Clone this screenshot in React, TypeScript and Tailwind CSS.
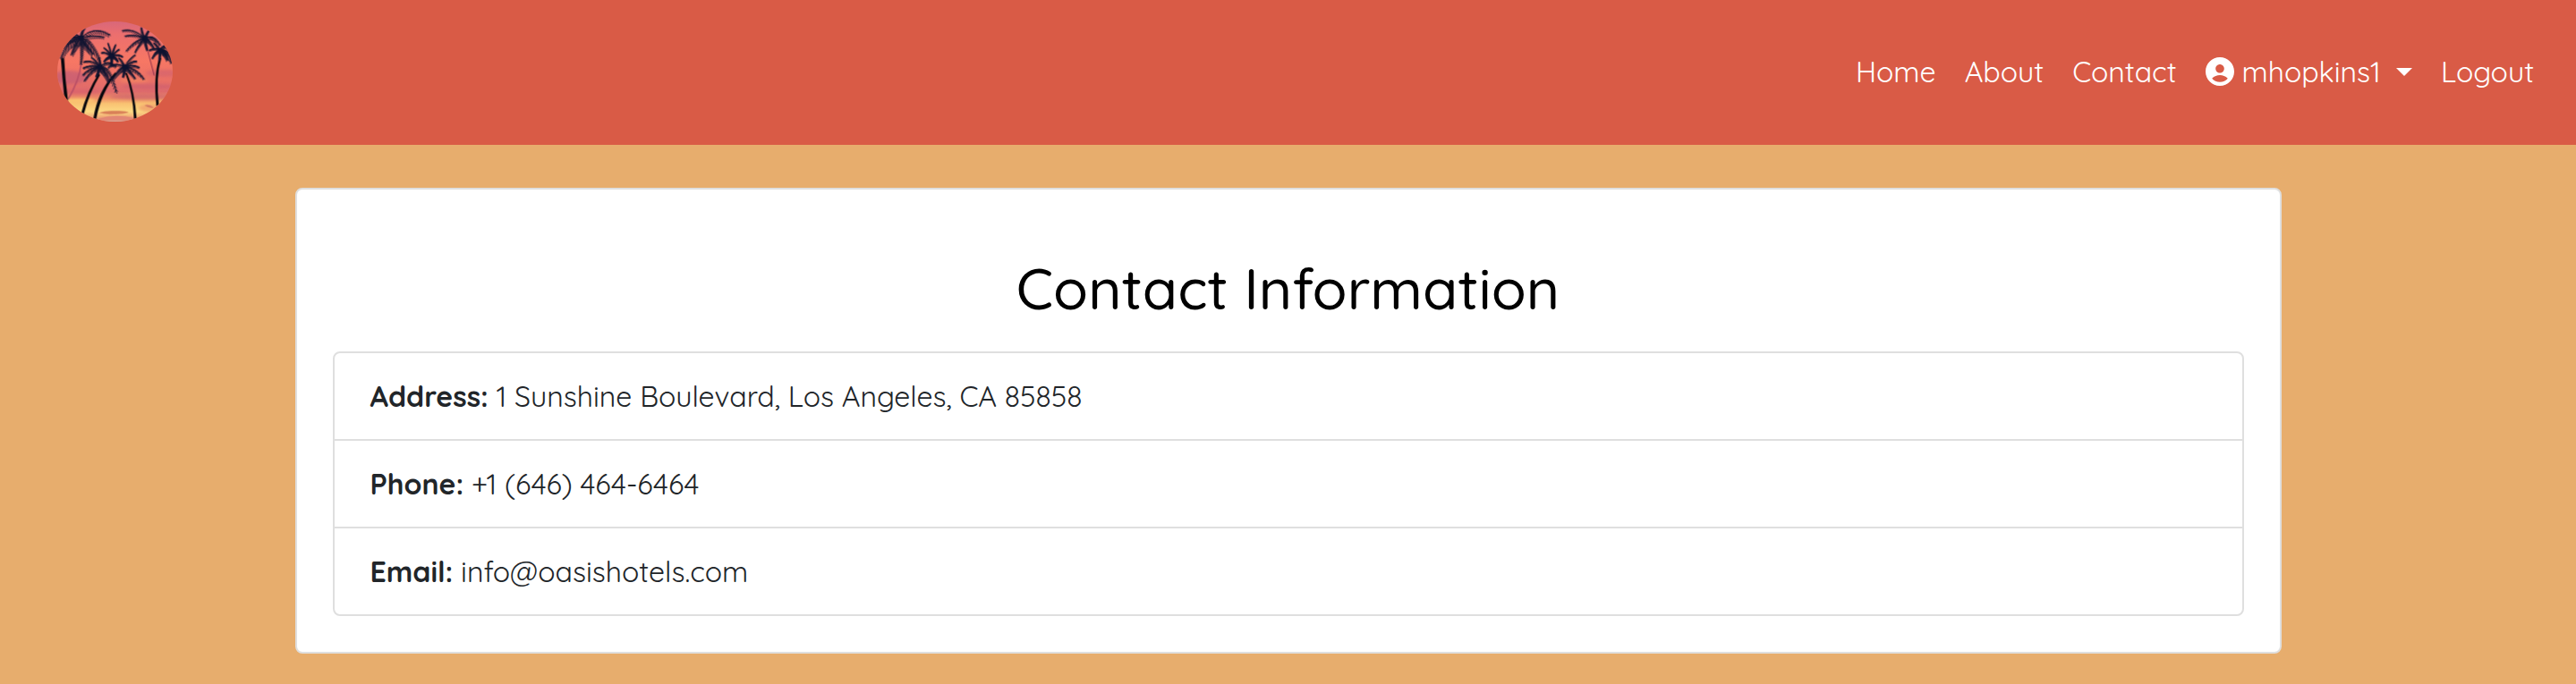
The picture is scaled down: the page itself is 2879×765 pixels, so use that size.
type Point = [number, number];
type FrondShape = { bend: Point; tip: Point; leaf: number };
type PalmShape = { crown: Point; fronds: FrondShape[] };

const INK = "#0d1230";

const palms: PalmShape[] = [
  {
    crown: [122, 82],
    fronds: [
      { bend: [165, 38], tip: [220, 74], leaf: 19 },
      { bend: [160, 70], tip: [200, 80], leaf: 15 },
      { bend: [155, 95], tip: [183, 152], leaf: 22 },
      { bend: [136, 110], tip: [162, 138], leaf: 18 },
      { bend: [128, 120], tip: [121, 172], leaf: 14 },
      { bend: [105, 100], tip: [90, 140], leaf: 18 },
      { bend: [78, 88], tip: [54, 152], leaf: 24 },
      { bend: [90, 70], tip: [60, 110], leaf: 22 },
      { bend: [100, 62], tip: [82, 72], leaf: 14 },
      { bend: [122, 60], tip: [134, 48], leaf: 10 },
    ],
  },
  {
    crown: [224, 143],
    fronds: [
      { bend: [206, 128], tip: [190, 132], leaf: 7 },
      { bend: [214, 124], tip: [198, 115], leaf: 7 },
      { bend: [220, 120], tip: [212, 99], leaf: 6 },
      { bend: [230, 120], tip: [238, 104], leaf: 7 },
      { bend: [238, 126], tip: [250, 120], leaf: 7 },
      { bend: [246, 134], tip: [262, 146], leaf: 7 },
      { bend: [226, 158], tip: [222, 176], leaf: 8 },
      { bend: [210, 146], tip: [198, 162], leaf: 8 },
      { bend: [238, 146], tip: [246, 162], leaf: 8 },
    ],
  },
  {
    crown: [186, 180],
    fronds: [
      { bend: [158, 152], tip: [130, 163], leaf: 10 },
      { bend: [155, 170], tip: [128, 184], leaf: 10 },
      { bend: [152, 180], tip: [127, 208], leaf: 10 },
      { bend: [155, 190], tip: [132, 228], leaf: 10 },
      { bend: [174, 158], tip: [156, 146], leaf: 9 },
      { bend: [186, 162], tip: [182, 148], leaf: 9 },
      { bend: [208, 150], tip: [240, 180], leaf: 13 },
      { bend: [218, 180], tip: [242, 268], leaf: 18 },
      { bend: [200, 192], tip: [216, 232], leaf: 15 },
      { bend: [180, 195], tip: [172, 212], leaf: 9 },
    ],
  },
  {
    crown: [268, 180],
    fronds: [
      { bend: [282, 152], tip: [304, 138], leaf: 10 },
      { bend: [292, 158], tip: [308, 160], leaf: 10 },
      { bend: [292, 168], tip: [318, 182], leaf: 10 },
      { bend: [305, 182], tip: [334, 222], leaf: 12 },
      { bend: [286, 192], tip: [304, 220], leaf: 10 },
      { bend: [262, 160], tip: [248, 148], leaf: 9 },
      { bend: [240, 160], tip: [212, 182], leaf: 10 },
      { bend: [250, 186], tip: [228, 222], leaf: 14 },
      { bend: [268, 196], tip: [262, 214], leaf: 9 },
    ],
  },
  {
    crown: [336, 84],
    fronds: [
      { bend: [300, 48], tip: [259, 58], leaf: 12 },
      { bend: [305, 68], tip: [268, 76], leaf: 10 },
      { bend: [305, 88], tip: [272, 128], leaf: 11 },
      { bend: [318, 100], tip: [302, 132], leaf: 9 },
      { bend: [326, 66], tip: [324, 47], leaf: 9 },
      { bend: [340, 66], tip: [350, 56], leaf: 9 },
      { bend: [360, 66], tip: [388, 108], leaf: 13 },
      { bend: [338, 104], tip: [344, 124], leaf: 9 },
      { bend: [350, 90], tip: [366, 116], leaf: 10 },
    ],
  },
  {
    crown: [388, 124],
    fronds: [
      { bend: [372, 112], tip: [350, 124], leaf: 9 },
      { bend: [372, 126], tip: [360, 152], leaf: 9 },
      { bend: [378, 108], tip: [366, 98], leaf: 9 },
      { bend: [398, 96], tip: [418, 118], leaf: 16 },
      { bend: [412, 118], tip: [426, 168], leaf: 16 },
      { bend: [402, 126], tip: [412, 158], leaf: 14 },
      { bend: [386, 138], tip: [384, 160], leaf: 8 },
    ],
  },
];

/* Leaflets hang from both sides of a curved spine and shorten towards its tip. */
function frondPath([x0, y0]: Point, { bend, tip, leaf }: FrondShape) {
  const at = (t: number): Point => [
    (1 - t) * (1 - t) * x0 + 2 * t * (1 - t) * bend[0] + t * t * tip[0],
    (1 - t) * (1 - t) * y0 + 2 * t * (1 - t) * bend[1] + t * t * tip[1],
  ];
  let d = `M${x0} ${y0}Q${bend[0]} ${bend[1]} ${tip[0]} ${tip[1]}`;
  const steps = 13;
  for (let i = 1; i < steps; i++) {
    const t = i / steps;
    const [x, y] = at(t);
    const [nx, ny] = at(t + 0.05);
    const angle = Math.atan2(ny - y, nx - x);
    const size = leaf * (1 - 0.55 * t);
    for (const side of [-0.75, 0.75]) {
      const dx = Math.cos(angle + side) * size;
      const dy = Math.sin(angle + side) * size;
      const drop = dy < 0 ? 0.35 : 1;
      d += `M${x.toFixed(1)} ${y.toFixed(1)}l${(dx * 0.8).toFixed(1)} ${(dy * drop + size * 0.2).toFixed(1)}`;
    }
  }
  return d;
}

function PalmLogo() {
  return (
    <svg viewBox="42 27 387 336" className="h-28 w-[129px]" role="img" aria-label="Palm trees at sunset">
      <defs>
        <linearGradient id="sky" x1="0" y1="0" x2="0" y2="1">
          <stop offset="0" stopColor="#d8677a" />
          <stop offset="0.13" stopColor="#ec6f6e" />
          <stop offset="0.4" stopColor="#f77764" />
          <stop offset="0.58" stopColor="#ea7066" />
          <stop offset="0.7" stopColor="#de6a6c" />
          <stop offset="0.77" stopColor="#ee8f66" />
          <stop offset="0.82" stopColor="#f9c272" />
          <stop offset="0.9" stopColor="#fcd983" />
          <stop offset="0.95" stopColor="#f2ae76" />
          <stop offset="1" stopColor="#e0907c" />
        </linearGradient>
        <clipPath id="oval">
          <ellipse cx="235.5" cy="195" rx="193.5" ry="168" />
        </clipPath>
        <filter id="soften">
          <feGaussianBlur stdDeviation="5" />
        </filter>
      </defs>
      <g clipPath="url(#oval)">
        <rect x="42" y="27" width="387" height="336" fill="url(#sky)" />
        <g filter="url(#soften)">
          <ellipse cx="80" cy="215" rx="65" ry="22" fill="#b8587a" opacity="0.55" />
          <ellipse cx="400" cy="200" rx="60" ry="12" fill="#c95c70" opacity="0.5" />
          <ellipse cx="350" cy="245" rx="90" ry="8" fill="#c75a72" opacity="0.5" />
          <ellipse cx="330" cy="280" rx="110" ry="9" fill="#c9606e" opacity="0.6" />
          <ellipse cx="110" cy="262" rx="70" ry="7" fill="#d8606a" opacity="0.6" />
          <ellipse cx="300" cy="225" rx="50" ry="6" fill="#f68a62" opacity="0.7" />
          <ellipse cx="370" cy="318" rx="55" ry="14" fill="#ee9a6a" opacity="0.7" />
          <ellipse cx="110" cy="292" rx="60" ry="7" fill="#ffd774" opacity="0.7" />
        </g>
        <path d="M182 333Q205 325 235 327Q270 325 282 332Q260 339 232 338Q200 340 182 333Z" fill="#d98058" />
        <path d="M180 352Q235 336 300 350V365H170Z" fill="#e28674" />
        <path d="M198 360H276V364H198Z" fill="#d2b3a4" />
        <path d="M334 308Q350 303 366 316Q350 320 334 308Z" fill="#d47a62" />
        <path d="M123 165Q116 225 78 288" fill="none" stroke="#b94f66" strokeWidth="5" />
        <path d="M342 112L367 208" fill="none" stroke="#8d2f48" strokeWidth="3" />
        <g fill="#06070d">
          <path d="M54 150H65Q68 220 77 284V300L66 285Q59 220 54 150Z" />
          <path d="M180 202L186 206Q150 265 131 337L122 335Q140 265 180 202Z" />
          <path d="M236 198L241 202Q190 262 172 356L163 352Q177 262 236 198Z" />
          <path d="M270 200L276 200Q302 262 308 354H299Q296 268 270 200Z" />
          <path d="M384 148L391 150Q371 215 383 310H374Q364 210 384 148Z" />
        </g>
        <g fill="none" stroke={INK} strokeWidth="2.6" strokeLinecap="round">
          {palms.map((palm) =>
            palm.fronds.map((frond) => (
              <path key={`${palm.crown}-${frond.tip}`} d={frondPath(palm.crown, frond)} />
            )),
          )}
        </g>
        <g fill={INK}>
          {palms.map((palm) => (
            <circle key={`${palm.crown}`} cx={palm.crown[0]} cy={palm.crown[1]} r="9" />
          ))}
        </g>
      </g>
    </svg>
  );
}

function UserIcon() {
  return (
    <svg viewBox="2 2 20 20" className="size-8 fill-current" aria-hidden="true">
      <path d="M12 2C6.480 2 2 6.480 2 12s4.480 10 10 10 10-4.480 10-10S17.520 2 12 2zm0 5c1.660 0 3 1.340 3 3s-1.340 3-3 3-3-1.340-3-3 1.340-3 3-3zm0 12.300c-2.200 0-4.200-.9-5.500-2.500 1.500-1.500 3.500-2.300 5.500-2.300s4 .8 5.500 2.300c-1.300 1.600-3.300 2.500-5.500 2.500z" />
    </svg>
  );
}

const details = [
  { label: "Address:", value: "1 Sunshine Boulevard, Los Angeles, CA 85858" },
  { label: "Phone:", value: "+1 (646) 464-6464" },
  { label: "Email:", value: "info@oasishotels.com" },
];

export default function App() {
  return (
    <div className="min-h-screen bg-[#e7ad6d] pb-8 font-[Quicksand,'Century_Gothic',sans-serif] text-[32px] leading-[48px] text-[#212529]">
      <header className="flex items-center justify-between bg-[#d95b46] pt-6 pr-[47px] pb-[26px] pl-16 text-white">
        <a href="#home" aria-label="Oasis Hotels">
          <PalmLogo />
        </a>
        <nav className="flex items-center gap-8">
          <a href="#home">Home</a>
          <a href="#about">About</a>
          <a href="#contact">Contact</a>
          <button type="button" aria-haspopup="menu" className="flex cursor-pointer items-center">
            <UserIcon />
            <span className="ml-[9px]">mhopkins1</span>
            <svg viewBox="0 0 18 9" className="ml-[17px] h-[9px] w-[18px] fill-current" aria-hidden="true">
              <path d="M0 0H18L9 9Z" />
            </svg>
          </button>
          <a href="#logout">Logout</a>
        </nav>
      </header>
      <main className="mx-auto mt-12 max-w-[2220px] rounded-lg border-2 border-[#dfdfdf] bg-white px-10 pt-[72px] pb-10">
        <h1 className="mb-[33px] text-center text-[64px] leading-[76px] font-medium text-black">Contact Information</h1>
        <ul className="divide-y-2 divide-[#dfdfdf] rounded-lg border-2 border-[#dfdfdf]">
          {details.map(({ label, value }) => (
            <li key={label} className="px-10 py-6">
              <strong className="font-bold">{label}</strong> {value}
            </li>
          ))}
        </ul>
      </main>
    </div>
  );
}
